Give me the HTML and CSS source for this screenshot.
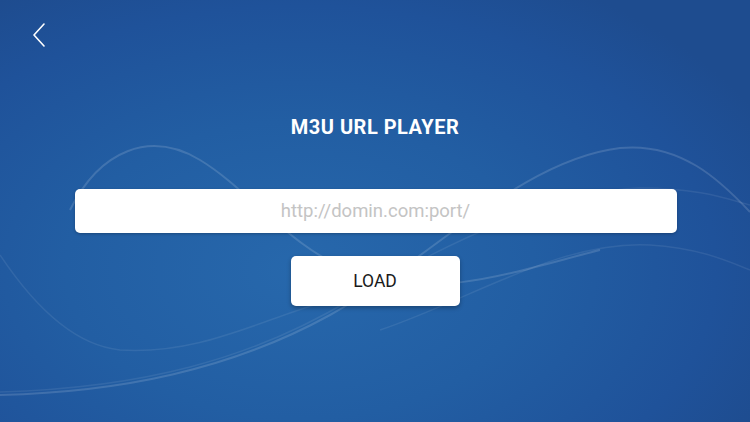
FILE: index.html
```html
<!DOCTYPE html>
<html>
<head>
<meta charset="utf-8">
<link rel="stylesheet" href="styles.css">
</head>
<body>
<div class="screen">
  <svg class="waves" viewBox="0 0 750 422" preserveAspectRatio="none" aria-hidden="true">
    <path d="M0 395 C120 392 230 370 330 315 C430 260 520 160 620 148 C680 142 720 180 750 212" />
    <path d="M0 392 C140 388 250 360 350 300 C450 240 560 190 640 188 C700 188 730 200 750 205" class="thin"/>
    <path d="M70 210 C100 150 150 130 200 160 C250 190 290 250 360 275 C440 300 520 270 600 250" />
    <path d="M0 255 C30 300 70 345 120 350 C200 355 260 320 330 300" class="thin"/>
    <path d="M380 330 C470 300 560 240 650 245 C700 248 730 262 750 270" class="thin"/>
  </svg>
  <header class="top">
    <button class="back" aria-label="Back">
      <svg width="14" height="24" viewBox="0 0 14 24"><path d="M12 1 L2 12 L12 23" fill="none" stroke="#fff" stroke-width="1.6" stroke-linecap="round" stroke-linejoin="round"/></svg>
    </button>
  </header>
  <main class="content">
    <h1 class="title">M3U URL PLAYER</h1>
    <div class="field">http://domin.com:port/</div>
    <button class="load">LOAD</button>
  </main>
</div>
</body>
</html>
```
FILE: styles.css
```css
html, body {
  margin: 0;
  padding: 0;
}
body {
  width: 750px;
  height: 422px;
  overflow: hidden;
  font-family: Roboto, "Liberation Sans", Arial, sans-serif;
}
.screen {
  position: relative;
  width: 750px;
  height: 422px;
  background:
    radial-gradient(ellipse 520px 330px at 300px 270px, #2768ac 0%, #225ea3 45%, #1f529a 80%, #1e4c8f 100%);
  overflow: hidden;
}
.waves {
  position: absolute;
  left: 0;
  top: 0;
  width: 750px;
  height: 422px;
  fill: none;
  stroke: rgba(255,255,255,0.14);
  stroke-width: 2;
}
.waves .thin {
  stroke: rgba(255,255,255,0.08);
  stroke-width: 1.5;
}
.top {
  position: relative;
  height: 70px;
  padding: 23px 0 0 32px;
  box-sizing: border-box;
}
.back {
  background: none;
  border: 0;
  padding: 0;
  width: 14px;
  height: 24px;
  display: block;
}
.content {
  position: relative;
  display: flex;
  flex-direction: column;
  align-items: center;
}
.title {
  margin: 45px 0 0;
  height: 24px;
  line-height: 24px;
  color: #fff;
  font-size: 20px;
  font-weight: 700;
  letter-spacing: 0.5px;
}
.field {
  margin-top: 50px;
  width: 602px;
  height: 44px;
  margin-left: 1px;
  background: #fff;
  border-radius: 5px;
  box-shadow: 0 1px 3px rgba(0,0,0,0.25);
  color: #c4c4c4;
  font-size: 18.5px;
  font-weight: 400;
  line-height: 44px;
  text-align: center;
}
.load {
  margin-top: 23px;
  width: 169px;
  height: 50px;
  border: 0;
  background: #fff;
  border-radius: 5px;
  box-shadow: 0 2px 4px rgba(0,0,0,0.3);
  color: #1a1a1a;
  font-family: Roboto, "Liberation Sans", Arial, sans-serif;
  font-size: 17.5px;
  padding: 0;
}
```
